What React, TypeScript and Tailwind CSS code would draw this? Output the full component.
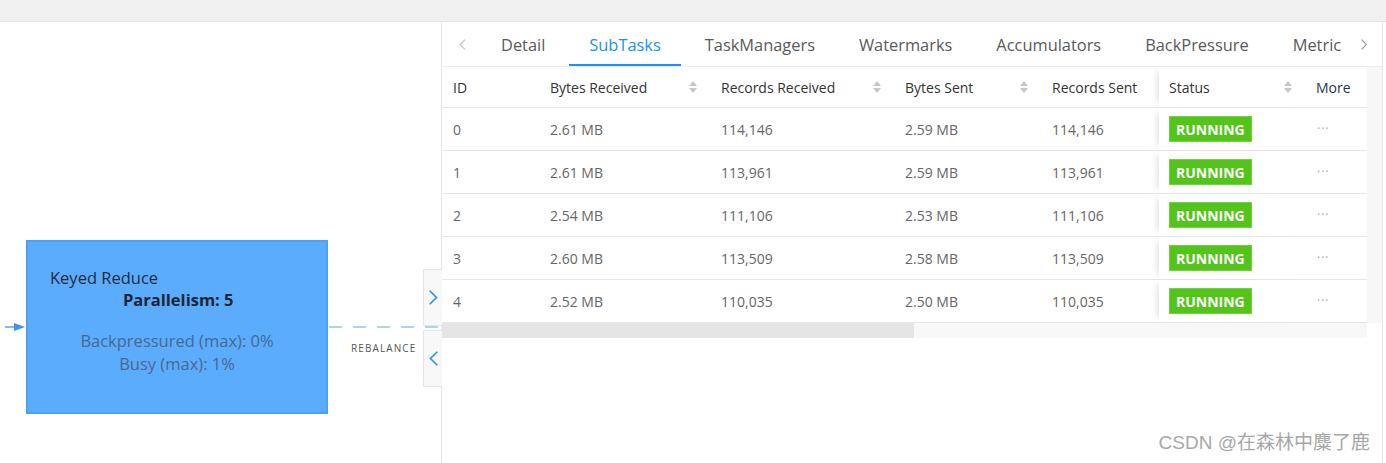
import React from "react";

type Col = { title: string; w: string; pad: string; sort: boolean };

const cols: Col[] = [
  { title: "ID", w: "w-[97px]", pad: "pl-[11px]", sort: false },
  { title: "Bytes Received", w: "w-[171px]", pad: "pl-[11px]", sort: true },
  { title: "Records Received", w: "w-[184px]", pad: "pl-[11px]", sort: true },
  { title: "Bytes Sent", w: "w-[147px]", pad: "pl-[11px]", sort: true },
  { title: "Records Sent", w: "w-[118px]", pad: "pl-[11px]", sort: false },
];

const rows = [
  ["0", "2.61 MB", "114,146", "2.59 MB", "114,146"],
  ["1", "2.61 MB", "113,961", "2.59 MB", "113,961"],
  ["2", "2.54 MB", "111,106", "2.53 MB", "111,106"],
  ["3", "2.60 MB", "113,509", "2.58 MB", "113,509"],
  ["4", "2.52 MB", "110,035", "2.50 MB", "110,035"],
];

const tabs = ["Detail", "SubTasks", "TaskManagers", "Watermarks", "Accumulators", "BackPressure", "Metric"];

function Sorter() {
  return (
    <svg width="8" height="14" viewBox="0 0 8 14" className="shrink-0">
      <path d="M4 1 L8 6 L0 6 Z" fill="#c8c8c8" />
      <path d="M4 13 L8 8 L0 8 Z" fill="#c8c8c8" />
    </svg>
  );
}

function Chevron({ dir, color, size = 10 }: { dir: "left" | "right"; color: string; size?: number }) {
  return (
    <svg width={size * 0.6} height={size} viewBox="0 0 6 10">
      <path
        d={dir === "left" ? "M5.5 0.5 L1 5 L5.5 9.5" : "M0.5 0.5 L5 5 L0.5 9.5"}
        fill="none"
        stroke={color}
        strokeWidth="1.1"
      />
    </svg>
  );
}

function Graph() {
  return (
    <div className="relative w-[441px] h-full bg-white">
      {/* incoming arrow */}
      <svg className="absolute left-0 top-[299px]" width="26" height="12" viewBox="0 0 26 12">
        <line x1="5" y1="6" x2="16" y2="6" stroke="#3b95f0" strokeWidth="1.3" />
        <path d="M14 2 L25 6 L14 10 Z" fill="#3b95f0" />
      </svg>

      {/* node */}
      <div className="absolute left-[26px] top-[218px] w-[302px] h-[174px] bg-[#5cacfd] border-2 border-[#4aa2f8] text-[16.5px]">
        <div className="pl-[22px] pt-[25px] leading-[22px] text-[#1e2d3c]">Keyed Reduce</div>
        <div className="pl-[95px] leading-[22px] font-bold text-[#1a2633]">Parallelism: 5</div>
        <div className="mt-[18px] text-center leading-[23px] text-[#46698c]">
          <div>Backpressured (max): 0%</div>
          <div>Busy (max): 1%</div>
        </div>
      </div>

      {/* edge */}
      <svg className="absolute left-[329px] top-[303px]" width="112" height="4" viewBox="0 0 112 4">
        <line x1="0" y1="2" x2="112" y2="2" stroke="#5ca5f2" strokeWidth="1.2" strokeDasharray="13 11" />
      </svg>
      <div className="absolute left-[351px] top-[319px] text-[10px] tracking-[1.1px] text-[#555]">REBALANCE</div>

      {/* panel toggles */}
      <div className="absolute left-[423px] top-[247px] w-[19px] h-[57px] bg-[#f8f8f8] border border-[#e6e6e6] border-r-0 flex items-center justify-center">
        <Chevron dir="right" color="#2b8ff0" size={15} />
      </div>
      <div className="absolute left-[423px] top-[308px] w-[19px] h-[57px] bg-[#f8f8f8] border border-[#e6e6e6] border-r-0 flex items-center justify-center">
        <Chevron dir="left" color="#2b8ff0" size={15} />
      </div>
    </div>
  );
}

function Tabs() {
  return (
    <div className="flex items-center h-[45px] border-b border-[#eeeeee] bg-white">
      <div className="w-[39px] flex justify-center pl-[2px]">
        <Chevron dir="left" color="#c4c4c4" size={11} />
      </div>
      <div className="flex-1 flex overflow-hidden h-full">
        {tabs.map((t) => (
          <div
            key={t}
            className={
              t === "SubTasks"
                ? "relative h-full flex items-center pt-[2px] px-5 mr-[4px] text-[16.4px] text-[#1890ff] shrink-0"
                : "relative h-full flex items-center pt-[2px] px-5 mr-[4px] text-[16.4px] text-[#5a5a5a] shrink-0"
            }
          >
            {t}
            {t === "SubTasks" && <div className="absolute left-0 right-0 bottom-0 h-[2px] bg-[#1890ff]" />}
          </div>
        ))}
      </div>
      <div className="w-[40px] flex justify-center pl-[4px]">
        <Chevron dir="right" color="#9a9a9a" size={11} />
      </div>
    </div>
  );
}

function Table() {
  return (
    <div className="flex">
      <div className="w-[925px]">
        {/* header */}
        <div className="flex h-[41px] border-b border-[#e8e8e8] text-[14px] text-[#333]">
          {cols.map((c) => (
            <div key={c.title} className={`${c.w} ${c.pad} pr-[13px] flex items-center justify-between`}>
              <span>{c.title}</span>
              {c.sort && <Sorter />}
            </div>
          ))}
          <div className="w-[146px] pl-[10px] pr-[13px] flex items-center justify-between shadow-[-7px_0_7px_-5px_rgba(0,0,0,0.12)]">
            <span>Status</span>
            <Sorter />
          </div>
          <div className="w-[62px] pl-[11px] flex items-center text-[#2a3550]">More</div>
        </div>
        {rows.map((r) => (
          <div key={r[0]} className="flex h-[43px] border-b border-[#e8e8e8] text-[14px] text-[#666]">
            {cols.map((c, i) => (
              <div key={c.title} className={`${c.w} ${c.pad} flex items-center`}>
                {r[i]}
              </div>
            ))}
            <div className="w-[146px] pl-[10px] flex items-center bg-white shadow-[-7px_0_7px_-5px_rgba(0,0,0,0.12)]">
              <span className="h-[26px] px-[6px] flex items-center bg-[#52c41a] border border-[#6fd23f] text-white font-bold text-[14px]">
                RUNNING
              </span>
            </div>
            <div className="w-[62px] pl-[12px] flex items-center text-[#aaa] text-[12px] tracking-[1px]">···</div>
          </div>
        ))}
        {/* horizontal scrollbar */}
        <div className="h-[15px] bg-[#f8f8f8]">
          <div className="w-[472px] h-full bg-[#e5e5e5]" />
        </div>
      </div>
      <div className="w-[15px] h-[256px] bg-[#f7f7f7]" />
    </div>
  );
}

export default function App() {
  return (
    <div className="relative w-[1386px] h-[463px] bg-white overflow-hidden" style={{ fontFamily: '"Open Sans", "Noto Sans", sans-serif' }}>
      <div className="h-[22px] bg-[#f0f0f0] border-b border-[#e4e4e4]" />
      <div className="flex h-[441px]">
        <Graph />
        <div className="w-[942px] h-full border-l border-r border-[#e8e8e8]">
          <Tabs />
          <Table />
        </div>
      </div>
      <div
        className="absolute right-[16px] bottom-[6px] text-[19px] text-[#a8a8a8]"
        style={{ fontFamily: '"Liberation Sans", "Noto Sans CJK SC", sans-serif' }}
      >
        CSDN @在森林中麋了鹿
      </div>
    </div>
  );
}
